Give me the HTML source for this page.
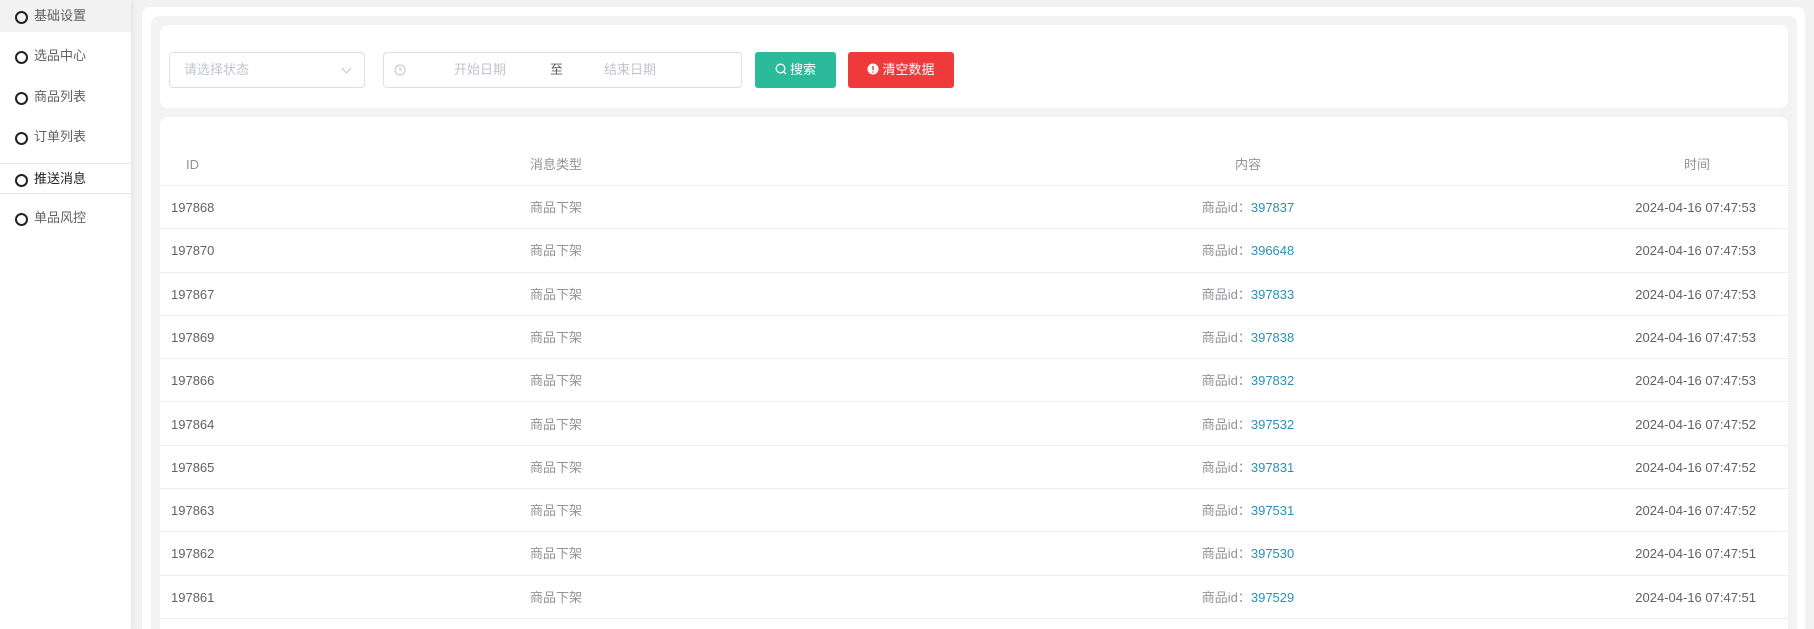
<!DOCTYPE html>
<html><head><meta charset="utf-8"><style>
*{box-sizing:border-box;margin:0;padding:0}
html,body{width:1814px;height:629px;overflow:hidden}
body{background:#f2f2f2;font-family:"Liberation Sans","Noto Sans CJK SC",sans-serif;font-size:13px;color:#606266}
#wrap{position:relative;width:1814px;height:629px;overflow:hidden}
.side{position:absolute;left:0;top:0;width:131px;height:629px;background:#fff;box-shadow:2px 0 6px rgba(0,0,0,.06)}
.it{position:absolute;left:0;width:131px;height:30px;line-height:30px;padding-left:34px;color:#606266}
.it:before{content:"";position:absolute;left:15px;top:10px;width:9px;height:9px;border:2px solid #222;border-radius:50%}
.it.act{background:#f2f2f2;height:32px;line-height:32px;top:0}
.it.act:before{top:11px}
.it.dark{color:#222}
.hr{position:absolute;left:0;width:131px;height:1px;background:#e4e4e4}
.panel{position:absolute;left:142px;top:7px;width:1663px;height:622px;background:#fff;border-radius:8px 8px 0 0}
.inner{position:absolute;left:151px;top:16px;width:1646px;height:613px;background:#f3f3f3;border-radius:8px 8px 0 0}
.card{position:absolute;left:160px;width:1628px;background:#fff;border-radius:8px}
.sel{position:absolute;left:169px;top:52px;width:196px;height:36px;border:1px solid #dcdfe6;border-radius:4px;color:#c0c4cc;line-height:34px;padding-left:14px}
.sel:after{content:"";position:absolute;right:14px;top:12px;width:6px;height:6px;border-right:1px solid #c0c4cc;border-bottom:1px solid #c0c4cc;transform:rotate(45deg)}
.date{position:absolute;left:383px;top:52px;width:359px;height:36px;border:1px solid #dcdfe6;border-radius:4px;color:#c0c4cc;line-height:34px}
.date span{position:absolute}
.btn{position:absolute;top:52px;height:36px;border-radius:3px;color:#fff;line-height:36px;text-align:center}
.row{position:absolute;left:160px;width:1628px;height:43.3px;border-bottom:1px solid #ebeef5;line-height:43px}
.c{position:absolute;white-space:nowrap}
.hd{color:#909399}
.lk{color:#2a8fbd}
.g{color:#909399}
</style></head><body><div id="wrap">
<div class="side">
<div class="it act">基础设置</div>
<div class="it" style="top:41px">选品中心</div>
<div class="it" style="top:82px">商品列表</div>
<div class="it" style="top:122px">订单列表</div>
<div class="hr" style="top:163px"></div>
<div class="it dark" style="top:164px">推送消息</div>
<div class="hr" style="top:193px"></div>
<div class="it" style="top:203px">单品风控</div>
</div>
<div class="panel"></div>
<div class="inner"></div>
<div class="card" style="top:25px;height:83px"></div>
<div class="sel">请选择状态</div>
<div class="date">
<svg style="position:absolute;left:10px;top:11px" width="12" height="12" viewBox="0 0 12 12"><circle cx="6" cy="6" r="5" fill="none" stroke="#c0c4cc" stroke-width="1"/><path d="M6 3v3h2" fill="none" stroke="#c0c4cc"/></svg>
<span style="left:70px">开始日期</span><span style="left:166px;color:#606266">至</span><span style="left:220px">结束日期</span></div>
<div class="btn" style="left:755px;width:81px;background:#2bbb9b"><svg width="12" height="12" viewBox="0 0 12 12" style="vertical-align:-1px;margin-right:3px"><circle cx="5.5" cy="5.5" r="4.3" fill="none" stroke="#fff" stroke-width="1.3"/><path d="M8.5 8.5l2.5 2.5" stroke="#fff" stroke-width="1.3"/></svg>搜索</div>
<div class="btn" style="left:848px;width:106px;background:#ee3a3a"><svg width="12" height="12" viewBox="0 0 12 12" style="vertical-align:-1px;margin-right:3px"><circle cx="6" cy="6" r="5.5" fill="#fff"/><path d="M6 3v4" stroke="#ee3a3a" stroke-width="1.5"/><circle cx="6" cy="9" r=".8" fill="#ee3a3a"/></svg>清空数据</div>
<div class="card" style="top:117px;height:512px;border-radius:8px 8px 0 0"></div>
<div class="row hd" style="top:143px"><span class="c" style="left:26px">ID</span><span class="c" style="left:370px">消息类型</span><span class="c" style="left:1088px;transform:translateX(-50%)">内容</span><span class="c" style="left:1537px;transform:translateX(-50%)">时间</span></div>
<div id="rows"></div>
</div>
<script>
var d=[["197868","397837","53"],["197870","396648","53"],["197867","397833","53"],["197869","397838","53"],["197866","397832","53"],["197864","397532","52"],["197865","397831","52"],["197863","397531","52"],["197862","397530","51"],["197861","397529","51"]];
var h="";d.forEach(function(r,i){h+='<div class="row" style="top:'+(186+i*43.3)+'px"><span class="c" style="left:11px">'+r[0]+'</span><span class="c g" style="left:370px">商品下架</span><span class="c" style="left:1088px;transform:translateX(-50%)"><span class="g">商品id：</span><span class="lk">'+r[1]+'</span></span><span class="c" style="right:32px">2024-04-16 07:47:'+r[2]+'</span></div>'});
document.getElementById("rows").innerHTML=h;
</script>
</body></html>
